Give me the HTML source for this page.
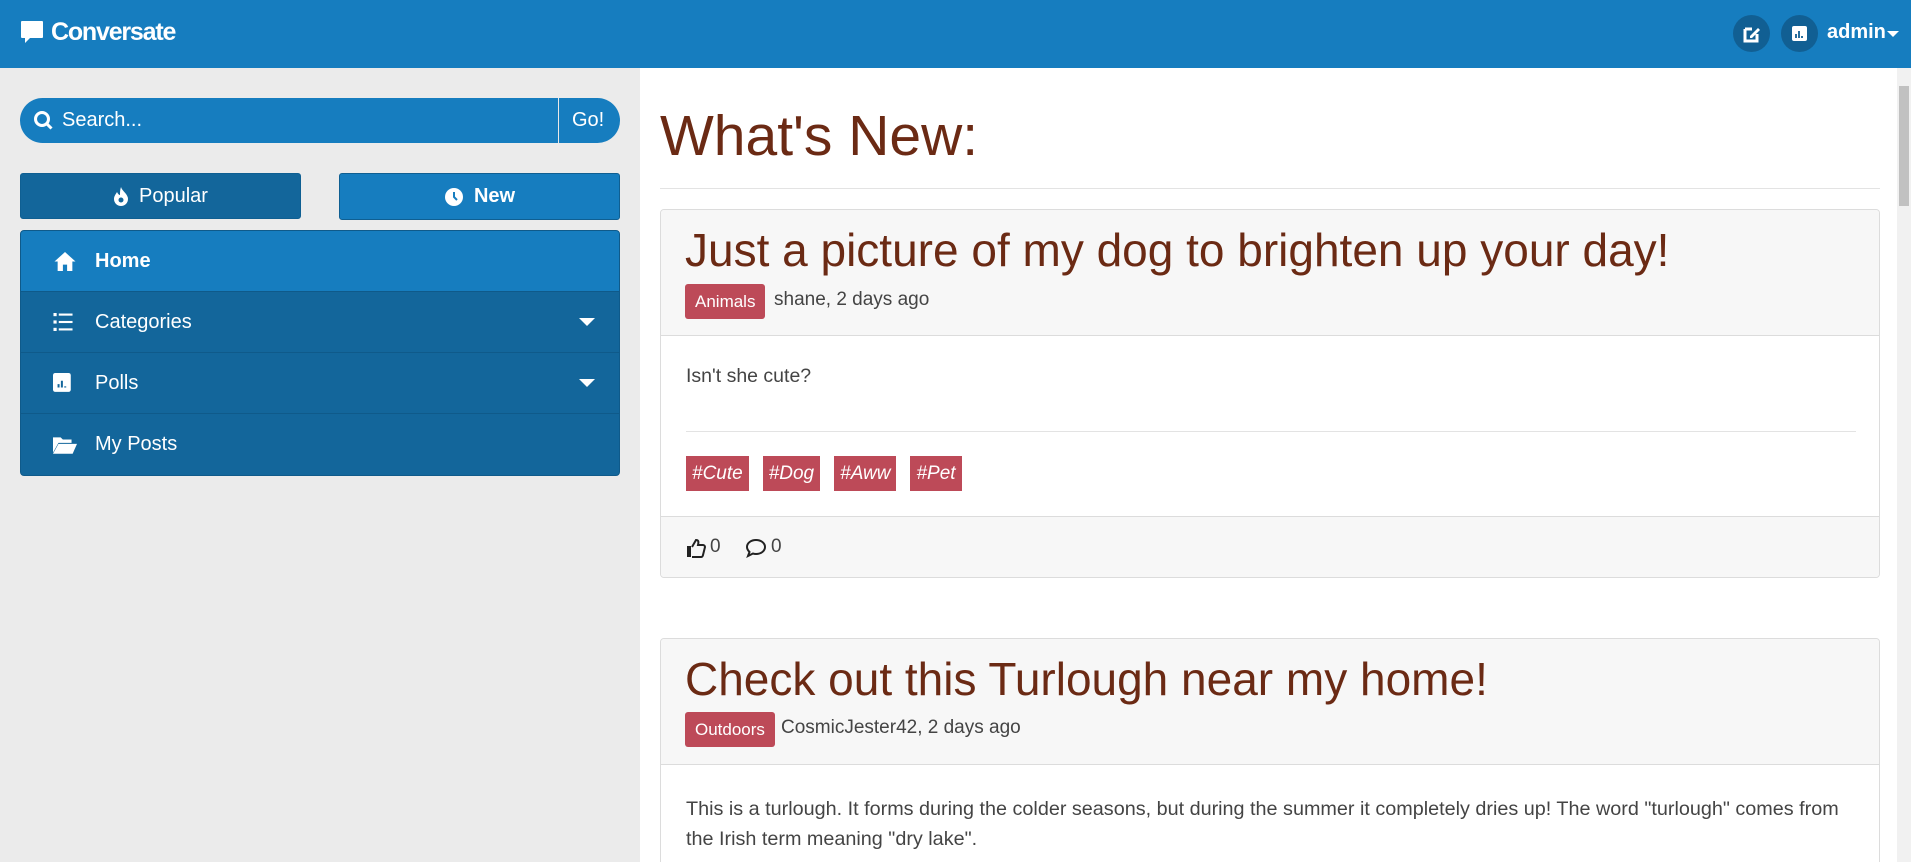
<!DOCTYPE html>
<html><head><meta charset="utf-8"><style>
*{box-sizing:border-box;margin:0;padding:0}
html{width:1911px;height:862px;overflow:hidden}
body{width:1911px;height:862px;overflow:hidden;font-family:"Liberation Sans",sans-serif;background:#fff;position:relative}
.hdr{position:absolute;left:0;top:0;width:1911px;height:68px;background:#167dbf;color:#fff}
.logo{position:absolute;left:20px;top:18px;font-size:25px;font-weight:bold;letter-spacing:-1.2px;display:flex;align-items:center;gap:7px}
.side{position:absolute;left:0;top:68px;width:640px;height:794px;background:#ebebeb}
.search{position:absolute;left:20px;top:98px;width:600px;height:45px;background:#167dbf;border-radius:23px;color:#fff;font-size:20px}
.btn{position:absolute;top:173px;height:46px;border-radius:3px;color:#fff;font-size:20px;display:flex;align-items:center;justify-content:center;gap:10px;border:1px solid #0f5f92}
.menu{position:absolute;left:20px;top:230px;width:600px;height:246px;background:#13669b;border-radius:4px;border:1px solid #0f5a8a;overflow:hidden}
.mi{height:61px;border-bottom:1px solid #0f5a8a;display:flex;align-items:center;color:#fff;font-size:20px;position:relative}
.mi svg{position:absolute;left:32px}
.mi span{position:absolute;left:74px}
.caret{position:absolute;right:24px;width:0;height:0;border-left:8px solid transparent;border-right:8px solid transparent;border-top:8px solid #fff}
h1{position:absolute;left:660px;top:103px;font-size:57px;font-weight:normal;color:#6b2a14}
.rule{position:absolute;left:660px;top:188px;width:1220px;border-top:1px solid #e3e3e3}
.card{position:absolute;left:660px;width:1220px;border:1px solid #dcdcdc;border-radius:4px;overflow:hidden;background:#fff}
.ch{background:#f7f7f7;border-bottom:1px solid #dcdcdc;position:relative}
.title{position:absolute;left:24px;font-size:46px;color:#6b2a14}
.badge{position:absolute;left:24px;background:#bd4a58;color:#fff;border-radius:3px;font-size:17px;padding:0 10px;height:35px;line-height:35px}
.meta{position:absolute;font-size:19px;color:#444}
.tag{display:inline-block;background:#bd4a58;color:#fff;font-style:italic;font-size:19px;height:35px;line-height:35px;padding:0 6px;margin-right:14px}
.sb{position:absolute;left:1897px;top:68px;width:14px;height:794px;background:#f1f1f1}
</style></head><body>
<div class="hdr">
 <div class="logo"><svg width="24" height="25" viewBox="0 0 24 25"><path d="M2 1h20a1 1 0 0 1 1 1v15a1 1 0 0 1-1 1H10l-5 5v-5H2a1 1 0 0 1-1-1V2a1 1 0 0 1 1-1z" fill="#fff"/></svg>Conversate</div>
 <div style="position:absolute;left:1733px;top:15px;width:37px;height:37px;border-radius:50%;background:#115f93"><svg width="37" height="37" viewBox="0 0 37 37"><path d="M12 14h7M12 14v12h12v-7" stroke="#fff" stroke-width="3" fill="none"/><path d="M17 21l8-8 2 2-8 8h-2z" fill="#fff"/></svg></div>
 <div style="position:absolute;left:1781px;top:15px;width:37px;height:37px;border-radius:50%;background:#115f93"><svg width="37" height="37" viewBox="0 0 37 37"><rect x="11" y="11" width="15" height="15" rx="2" fill="#fff"/><path d="M15 23v-4M18 23v-7M21 23v-2" stroke="#115f93" stroke-width="1.8"/></svg></div>
 <div style="position:absolute;left:1827px;top:21px;font-size:20px;font-weight:bold">admin</div>
 <div style="position:absolute;left:1887px;top:31px;border-left:6px solid transparent;border-right:6px solid transparent;border-top:6px solid #fff"></div>
</div>
<div class="side"></div>
<div class="search">
 <svg style="position:absolute;left:13px;top:12px" width="21" height="21" viewBox="0 0 21 21"><circle cx="9" cy="9" r="6.5" stroke="#fff" stroke-width="3" fill="none"/><path d="M13.5 13.5l5 5" stroke="#fff" stroke-width="3"/></svg>
 <span style="position:absolute;left:42px;top:11px">Search...</span>
 <div style="position:absolute;left:538px;top:0;height:45px;border-left:1px solid #e8e8e8"></div>
 <span style="position:absolute;left:552px;top:11px">Go!</span>
</div>
<div class="btn" style="left:20px;width:281px;background:#13669b"><svg width="16" height="19" viewBox="0 0 16 19"><path d="M8 0C9 4 15 7 15 12a7 7 0 0 1-14 0C1 9 3 7 4 5c1 2 2 3 3 3C7 5 7 3 8 0z" fill="#fff"/><circle cx="8" cy="13" r="2.5" fill="#13669b"/></svg>Popular</div>
<div class="btn" style="left:339px;width:281px;height:47px;background:#167dbf;font-weight:bold"><svg width="20" height="20" viewBox="0 0 20 20"><circle cx="10" cy="10" r="9" fill="#fff"/><path d="M10 5v5l3 3" stroke="#167dbf" stroke-width="2" fill="none"/></svg>New</div>
<div class="menu">
 <div class="mi" style="background:#167dbf;font-weight:bold"><svg width="24" height="21" viewBox="0 0 22 20"><path d="M11 1L1 10h3v9h5v-6h4v6h5v-9h3z" fill="#fff"/></svg><span>Home</span></div>
 <div class="mi"><svg width="20" height="18" viewBox="0 0 18 17"><rect x="0" y="0" width="3" height="3" fill="#fff"/><rect x="0" y="7" width="3" height="3" fill="#fff"/><rect x="0" y="14" width="3" height="3" fill="#fff"/><rect x="5" y="0.5" width="13" height="2" fill="#fff"/><rect x="5" y="7.5" width="13" height="2" fill="#fff"/><rect x="5" y="14.5" width="13" height="2" fill="#fff"/></svg><span>Categories</span><div class="caret"></div></div>
 <div class="mi"><svg width="20" height="20" viewBox="0 0 18 18"><rect width="16" height="17" rx="2" fill="#fff"/><path d="M5 13v-3M8 13v-6M11 13v-1" stroke="#13669b" stroke-width="1.8"/></svg><span>Polls</span><div class="caret"></div></div>
 <div class="mi" style="border:none"><svg width="24" height="20" viewBox="0 0 22 18"><path d="M0 2h7l2 2h8v3H5L0 16z" fill="#fff"/><path d="M5 8h17l-4 9H0z" fill="#fff"/></svg><span>My Posts</span></div>
</div>
<h1>What's New:</h1>
<div class="rule"></div>
<div class="card" style="top:209px;height:369px">
 <div class="ch" style="height:126px">
  <div class="title" style="top:13px">Just a picture of my dog to brighten up your day!</div>
  <div class="badge" style="top:74px">Animals</div>
  <div class="meta" style="left:113px;top:79px">shane, 2 days ago</div>
 </div>
 <div style="position:absolute;left:25px;top:155px;font-size:19.5px;color:#444">Isn't she cute?</div>
 <div style="position:absolute;left:25px;top:221px;width:1170px;border-top:1px solid #e3e3e3"></div>
 <div style="position:absolute;left:25px;top:246px"><span class="tag">#Cute</span><span class="tag">#Dog</span><span class="tag">#Aww</span><span class="tag">#Pet</span></div>
 <div style="position:absolute;left:0;top:306px;width:1220px;height:63px;background:#f7f7f7;border-top:1px solid #dcdcdc;font-size:19px;color:#444">
  <svg style="position:absolute;left:25px;top:21px" width="20" height="20" viewBox="0 0 20 20"><rect x="1" y="8" width="4" height="11" fill="#222"/><path d="M6 9l4-7c2 0 3 1 2 5h5c1 0 2 1 2 2l-2 8c0 1-1 2-2 2H6" stroke="#222" stroke-width="2" fill="none"/></svg>
  <span style="position:absolute;left:49px;top:19px">0</span>
  <svg style="position:absolute;left:85px;top:21px" width="20" height="20" viewBox="0 0 20 20"><path d="M10 2c5 0 9 3 9 7s-4 7-9 7c-1 0-2 0-3-.5L2 18l1.5-4C2 12.5 1 11 1 9c0-4 4-7 9-7z" stroke="#222" stroke-width="2" fill="none"/></svg>
  <span style="position:absolute;left:110px;top:19px">0</span>
 </div>
</div>
<div class="card" style="top:638px;height:240px">
 <div class="ch" style="height:126px">
  <div class="title" style="top:13px">Check out this Turlough near my home!</div>
  <div class="badge" style="top:73px">Outdoors</div>
  <div class="meta" style="left:120px;top:78px">CosmicJester42, 2 days ago</div>
 </div>
 <div style="position:absolute;left:25px;top:155px;width:1165px;font-size:19.8px;color:#444;line-height:30px">This is a turlough. It forms during the colder seasons, but during the summer it completely dries up! The word "turlough" comes from the Irish term meaning "dry lake".</div>
</div>
<div class="sb"><div style="position:absolute;left:2px;top:18px;width:10px;height:120px;background:#c1c1c1"></div></div>
</body></html>
